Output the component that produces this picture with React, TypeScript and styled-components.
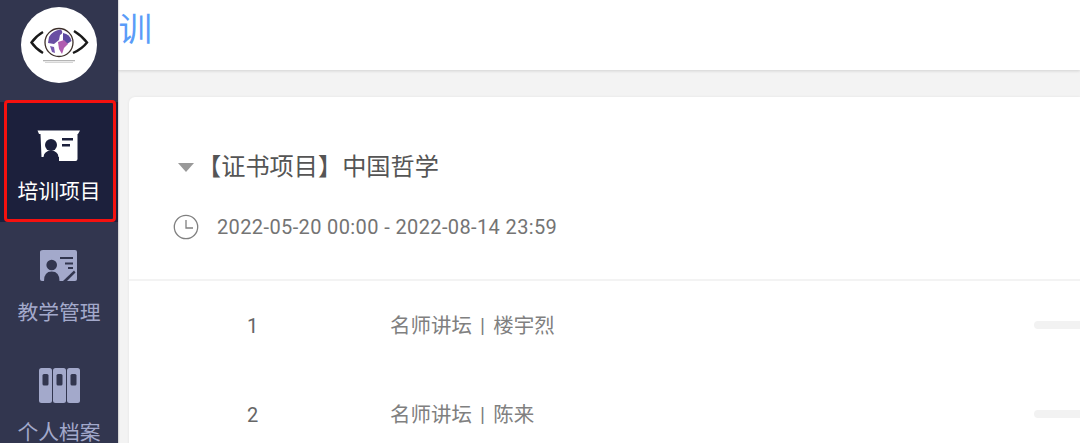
import React from 'react';
import styled, { createGlobalStyle } from 'styled-components';

const FONT = '"Roboto", "Noto Sans CJK SC", sans-serif';

const GlobalStyle = createGlobalStyle`
  html, body {
    margin: 0;
    padding: 0;
    height: 100%;
    overflow: hidden;
    background: #f3f3f3;
    font-family: ${FONT};
  }
  #root {
    height: 100%;
  }
`;

const Page = styled.div`
  display: flex;
  width: 1080px;
  height: 443px;
  overflow: hidden;
`;

const Sidebar = styled.aside`
  position: relative;
  z-index: 2;
  flex: 0 0 118px;
  display: flex;
  flex-direction: column;
  background: #32364f;
  box-shadow: 1px 0 1px rgba(0, 0, 0, 0.12);
`;

const LogoBox = styled.div`
  flex: 0 0 102px;
  display: flex;
  justify-content: center;
  padding-top: 7px;
  box-sizing: border-box;
`;

const NavItem = styled.div<{ $active?: boolean }>`
  position: relative;
  flex: 0 0 120px;
  display: flex;
  flex-direction: column;
  align-items: center;
  box-sizing: border-box;
  padding-top: ${(p) => (p.$active ? 27 : 28)}px;
  background: ${(p) => (p.$active ? '#1c203c' : 'transparent')};
  color: ${(p) => (p.$active ? '#ffffff' : '#a3a9cb')};
`;

const Highlight = styled.div`
  position: absolute;
  left: 4px;
  right: 2px;
  top: -2px;
  height: 122px;
  box-sizing: border-box;
  border: 3px solid #f5110f;
  border-radius: 4px;
`;

const IconSlot = styled.div`
  height: 32px;
  margin-bottom: 18px;
  display: flex;
  align-items: center;
  justify-content: center;
`;

const NavLabel = styled.span`
  font-size: 20.8px;
  line-height: 26px;
  white-space: nowrap;
`;

const Main = styled.main`
  flex: 1;
  min-width: 0;
  display: flex;
  flex-direction: column;
`;

const Header = styled.header`
  flex: 0 0 70px;
  background: #ffffff;
  box-shadow: 0 1px 3px rgba(0, 0, 0, 0.14);
  display: flex;
  align-items: center;
`;

const PageTitle = styled.h1`
  margin: 0 0 10px -33px;
  font-size: 33.5px;
  line-height: 40px;
  font-weight: 400;
  color: #5a9cf8;
  white-space: nowrap;
`;

const Body = styled.div`
  flex: 1;
  padding: 27px 0 0 11px;
`;

const Card = styled.section`
  background: #ffffff;
  border-radius: 6px 0 0 0;
  height: 400px;
  box-shadow: 0 0 3px rgba(0, 0, 0, 0.07);
`;

const CardHead = styled.div`
  height: 184px;
  box-sizing: border-box;
  padding: 54px 0 0 44px;
  border-bottom: 2px solid #f3f3f3;
`;

const TitleRow = styled.div`
  display: flex;
  align-items: center;
  height: 32px;
`;

const Caret = styled.span`
  width: 0;
  height: 0;
  margin: 0 0 0 5px;
  border-left: 8px solid transparent;
  border-right: 8px solid transparent;
  border-top: 9px solid #999999;
`;

const ProjectTitle = styled.h2`
  margin: 0 0 0 3px;
  font-size: 24.2px;
  line-height: 32px;
  font-weight: 400;
  color: #555555;
  white-space: nowrap;
`;

const DateRow = styled.div`
  display: flex;
  align-items: center;
  height: 28px;
  margin-top: 30px;
`;

const DateText = styled.span`
  margin-left: 18px;
  font-size: 20px;
  line-height: 28px;
  letter-spacing: 0.38px;
  color: #747474;
  white-space: nowrap;
`;

const LessonRow = styled.div`
  display: flex;
  align-items: center;
  height: 89px;
`;

const LessonIndex = styled.span`
  flex: 0 0 261px;
  padding-left: 118px;
  box-sizing: border-box;
  font-size: 20px;
  color: #666666;
`;

const LessonName = styled.span`
  flex: 0 0 644px;
  margin-top: -3px;
  font-size: 20.5px;
  word-spacing: 3px;
  color: #808080;
  white-space: nowrap;
`;

const ProgressTrack = styled.div`
  flex: 1;
  height: 8px;
  margin-top: -1px;
  border-radius: 4px 0 0 4px;
  background: #f2f2f2;
`;

const LogoIcon = () => (
  <svg width="76" height="76" viewBox="0 0 76 76">
    <circle cx="38" cy="38" r="38" fill="#ffffff" />
    <path d="M22 25 Q15 29 10.500 35.500 Q15 42 22 46" fill="none" stroke="#1a1a1a" strokeWidth="2.400" />
    <path d="M53 24 Q61 29 66 35.500 Q61 42 52 46" fill="none" stroke="#1a1a1a" strokeWidth="2.400" />
    <circle cx="38" cy="35.500" r="14" fill="#ffffff" stroke="#3d2f2a" strokeWidth="1.300" />
    <path d="M28 30 Q32 23 40 22.500 Q43 26 39 28 L38 33 L33 37 L27 36 Z" fill="#6a4fa3" />
    <path d="M42 26 Q49 27 50.500 34 L46 37 L42 33 Z" fill="#5d4aa0" />
    <path d="M37 35 L43 33 L47 37 L43 41 L41 47 L38 42 Z" fill="#b05cb0" />
    <path d="M29 39 L33 40 L34 46 L31 45 Z" fill="#7a5ab0" />
    <rect x="22" y="53" width="32" height="1.300" fill="#b5b5b5" />
    <rect x="24" y="55" width="28" height="0.900" fill="#d2d2d2" />
  </svg>
);

const TrainingIcon = () => (
  <svg width="44" height="33" viewBox="0 0 44 33">
    <path d="M0.500 1.500 H43 L41 5 H40.500 V30 Q40.500 32 38.500 32 H22 V28 H4.500 L3.500 5 H2 Z" fill="#ffffff" />
    <circle cx="14" cy="16" r="6" fill="#1c203c" />
    <path d="M6.500 28 Q7 22 14 21.500 Q21 22 21.500 28 V32 H6.500 Z" fill="#1c203c" />
    <rect x="25" y="9" width="11" height="2.500" fill="#1c203c" />
    <rect x="25" y="15" width="8" height="2.500" fill="#1c203c" />
  </svg>
);

const ManageIcon = () => (
  <svg width="38" height="32" viewBox="0 0 38 32">
    <path d="M3 0 H35 Q37 0 37 2 V29 Q37 31 35 31 H2 Q0 31 0 29 V2 Q0 0 3 0 Z" fill="#a3a9cb" />
    <circle cx="11.700" cy="15" r="5.300" fill="#32364f" />
    <path d="M4 31 Q4 21.500 11.700 21.500 Q19.500 21.500 19.500 31 Z" fill="#32364f" />
    <rect x="20" y="7" width="13" height="2" fill="#32364f" />
    <rect x="25" y="12.500" width="8" height="2" fill="#32364f" />
    <rect x="28" y="17" width="5" height="2" fill="#32364f" />
    <path d="M23 31 L34 20.500 L35.500 22.500 L27 31 Z" fill="#32364f" />
  </svg>
);

const ArchiveIcon = () => (
  <svg width="41" height="36" viewBox="0 0 41 36">
    <g fill="#a3a9cb">
      <rect x="0" y="0" width="13" height="35" rx="2.500" />
      <rect x="14" y="0" width="13" height="35" rx="2.500" />
      <rect x="28" y="0" width="13" height="35" rx="2.500" />
    </g>
    <g fill="#32364f">
      <rect x="3.500" y="6" width="6" height="11.500" rx="1.500" />
      <rect x="17.500" y="6" width="6" height="11.500" rx="1.500" />
      <rect x="31.500" y="6" width="6" height="11.500" rx="1.500" />
    </g>
  </svg>
);

const ClockIcon = () => (
  <svg width="26" height="26" viewBox="0 0 26 26">
    <circle cx="13" cy="13" r="11.700" fill="none" stroke="#808080" strokeWidth="1.300" />
    <path d="M13 6 V14 H20" fill="none" stroke="#808080" strokeWidth="1.300" />
  </svg>
);

const navItems = [
  { label: '培训项目', icon: <TrainingIcon />, active: true },
  { label: '教学管理', icon: <ManageIcon /> },
  { label: '个人档案', icon: <ArchiveIcon /> },
];

const lessons = ['名师讲坛 | 楼宇烈', '名师讲坛 | 陈来'];

const App: React.FC = () => (
  <Page>
    <GlobalStyle />
    <Sidebar>
      <LogoBox>
        <LogoIcon />
      </LogoBox>
      {navItems.map((item) => (
        <NavItem key={item.label} $active={item.active}>
          <IconSlot>{item.icon}</IconSlot>
          <NavLabel>{item.label}</NavLabel>
          {item.active && <Highlight />}
        </NavItem>
      ))}
    </Sidebar>
    <Main>
      <Header>
        <PageTitle>培训</PageTitle>
      </Header>
      <Body>
        <Card>
          <CardHead>
            <TitleRow>
              <Caret />
              <ProjectTitle>【证书项目】中国哲学</ProjectTitle>
            </TitleRow>
            <DateRow>
              <ClockIcon />
              <DateText>2022-05-20 00:00 - 2022-08-14 23:59</DateText>
            </DateRow>
          </CardHead>
          {lessons.map((name, i) => (
            <LessonRow key={name}>
              <LessonIndex>{i + 1}</LessonIndex>
              <LessonName>{name}</LessonName>
              <ProgressTrack />
            </LessonRow>
          ))}
        </Card>
      </Body>
    </Main>
  </Page>
);

export default App;
